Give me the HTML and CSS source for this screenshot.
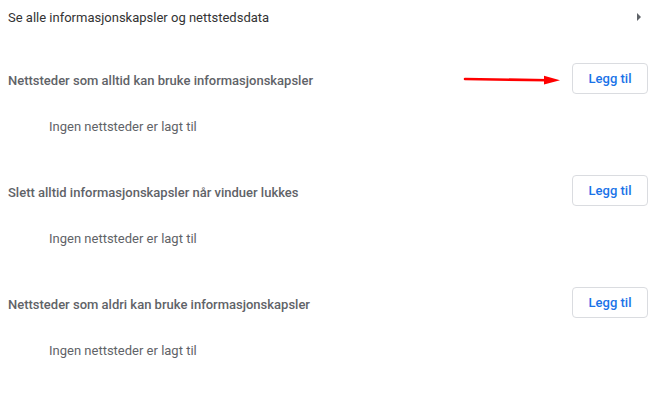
FILE: index.html
```html
<!DOCTYPE html>
<html>
<head>
    <title>Informasjonskapsler</title>
    <meta charset="utf-8">
    <link rel="stylesheet" href="styles.css">
</head>
<body>
    <div class="page">
        <!-- lenke til alle data -->
        <div class="link-row">
            <span>Se alle informasjonskapsler og nettstedsdata</span>
            <span class="subpage-arrow"></span>
        </div>

        <div class="section">
            <div class="section-header">
                <h3>Nettsteder som alltid kan bruke informasjonskapsler</h3>
                <button class="add-btn">Legg til</button>
            </div>
            <div class="empty-list">Ingen nettsteder er lagt til</div>
        </div>

        <div class="section">
            <div class="section-header">
                <h3>Slett alltid informasjonskapsler når vinduer lukkes</h3>
                <button class="add-btn">Legg til</button>
            </div>
            <div class="empty-list">Ingen nettsteder er lagt til</div>
        </div>

        <div class="section">
            <div class="section-header">
                <h3>Nettsteder som aldri kan bruke informasjonskapsler</h3>
                <button class="add-btn">Legg til</button>
            </div>
            <div class="empty-list">Ingen nettsteder er lagt til</div>
        </div>

        <!-- rød pil (annotasjon) -->
        <svg class="annotation" width="662" height="415" viewBox="0 0 662 415">
            <path d="M465 79 L548 80.3" stroke="#ff0000" stroke-width="2.6" stroke-linecap="round" fill="none"/>
            <polygon points="544,75.8 560,80.3 544,84.6" fill="#ff0000"/>
        </svg>
    </div>
</body>
</html>
```

FILE: styles.css
```css
/* grunnstil */
body {
    margin: 0;
    background: #fff;
    font-family: Roboto, "Liberation Sans", Arial, sans-serif;
    font-size: 13px;
}
.page {
    position: relative;
    width: 662px;
    height: 415px;
}

/* øverste rad */
.link-row {
    height: 34px;
    display: flex;
    align-items: center;
    justify-content: space-between;
    padding: 0 21px 0 8px;
    color: #333;
}
.subpage-arrow {
    width: 0;
    height: 0;
    border-top: 4px solid transparent;
    border-bottom: 4px solid transparent;
    border-left: 4.5px solid #5f6368;
}

/* seksjoner */
.section {
    margin-top: 20px;
}
.section + .section {
    margin-top: 16px;
}
.section-header {
    height: 48px;
    display: flex;
    align-items: center;
    justify-content: space-between;
    padding: 0 14px 0 8px;
}
.section-header h3 {
    margin: 4px 0 0;
    font-size: 13px;
    font-weight: 500;
    color: #5f6368;
}
.add-btn {
    width: 76px;
    height: 31px;
    background: #fff;
    border: 1px solid #dadce0;
    border-radius: 4px;
    color: #1a73e8;
    font-family: inherit;
    font-size: 13px;
    font-weight: 500;
    padding: 0;
}
.empty-list {
    height: 48px;
    display: flex;
    align-items: center;
    padding-left: 49px;
    color: #5f6368;
}

/* annotasjon */
.annotation {
    position: absolute;
    left: 0;
    top: 0;
    pointer-events: none;
}
```
